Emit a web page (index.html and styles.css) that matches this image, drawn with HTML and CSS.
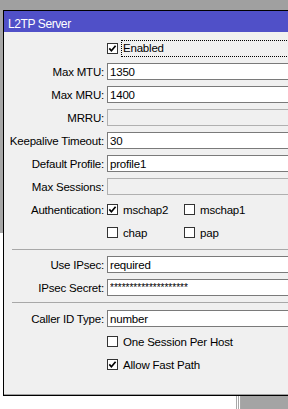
FILE: index.html
```html
<!DOCTYPE html>
<html>
<head>
    <meta charset="utf-8" />
    <title>L2TP Server</title>
    <link rel="stylesheet" href="styles.css">
</head>
<body>
    <div class="screen">
        <div class="desk_top"></div>
        <div class="desk_middle">
            <div class="desk_edge"></div>
            <div class="window">
                <div class="title">L2TP Server</div>
                <div class="content">
                    <div class="group">
                        <span></span>
                        <div class="checks">
                            <span class="check check_focus">
                                <span class="box"><svg width="9" height="9" viewBox="0 0 9 9"><path d="M1.3 4.4 L3.4 6.8 L7.6 1.8" fill="none" stroke="#000" stroke-width="1.7" /></svg></span>
                                <span class="focus">Enabled</span>
                            </span>
                        </div>

                        <span class="caption">Max MTU:</span>
                        <input class="field" type="text" readonly value="1350" />

                        <span class="caption">Max MRU:</span>
                        <input class="field" type="text" readonly value="1400" />

                        <span class="caption">MRRU:</span>
                        <input class="field" type="text" disabled value="" />

                        <span class="caption">Keepalive Timeout:</span>
                        <input class="field" type="text" readonly value="30" />

                        <span class="caption">Default Profile:</span>
                        <input class="field" type="text" readonly value="profile1" />

                        <span class="caption">Max Sessions:</span>
                        <input class="field" type="text" disabled value="" />

                        <span class="caption">Authentication:</span>
                        <div class="checks">
                            <span class="check">
                                <span class="box"><svg width="9" height="9" viewBox="0 0 9 9"><path d="M1.3 4.4 L3.4 6.8 L7.6 1.8" fill="none" stroke="#000" stroke-width="1.7" /></svg></span>
                                mschap2
                            </span>
                            <span class="check"><span class="box"></span>mschap1</span>
                        </div>

                        <span></span>
                        <div class="checks">
                            <span class="check"><span class="box"></span>chap</span>
                            <span class="check"><span class="box"></span>pap</span>
                        </div>
                    </div>

                    <hr class="sep_first" />

                    <div class="group">
                        <span class="caption">Use IPsec:</span>
                        <input class="field" type="text" readonly value="required" />

                        <span class="caption">IPsec Secret:</span>
                        <input class="field field_secret" type="text" readonly value="********************" />
                    </div>

                    <hr class="sep_second" />

                    <div class="group">
                        <span class="caption">Caller ID Type:</span>
                        <input class="field" type="text" readonly value="number" />

                        <span></span>
                        <div class="checks">
                            <span class="check"><span class="box"></span>One Session Per Host</span>
                        </div>

                        <span></span>
                        <div class="checks">
                            <span class="check">
                                <span class="box"><svg width="9" height="9" viewBox="0 0 9 9"><path d="M1.3 4.4 L3.4 6.8 L7.6 1.8" fill="none" stroke="#000" stroke-width="1.7" /></svg></span>
                                Allow Fast Path
                            </span>
                        </div>
                    </div>
                </div>
            </div>
        </div>
        <div class="desk_bottom">
            <div class="desk_blank"></div>
            <div class="desk_split"></div>
            <div class="desk_gray"></div>
        </div>
    </div>
</body>
</html>
```

FILE: styles.css
```css
* {
    font-family: "Liberation Sans", Arial, sans-serif;
}

body {
    margin: 0;
}

.screen {
    width: 288px;
    height: 409px;
    overflow: hidden;
    background: #fff;
    display: flex;
    flex-direction: column;
    font-size: 11.5px;
    letter-spacing: -0.2px;
    color: #000;
}

.desk_top {
    flex: none;
    height: 10px;
    background: #a0a0a0;
}

.desk_middle {
    flex: none;
    height: 386px;
    display: flex;
}

.desk_edge {
    flex: none;
    width: 3px;
    background: linear-gradient(#a6a6a6 0 223px, #fff 223px);
}

.window {
    flex: none;
    width: 320px;
    box-sizing: border-box;
    border: 1px solid #000;
    border-right: none;
    background: #f0f0f0;
    display: flex;
    flex-direction: column;
}

.title {
    flex: none;
    height: 21px;
    box-sizing: border-box;
    padding: 5px 0 0 4px;
    line-height: 17px;
    font-size: 12px;
    letter-spacing: -0.4px;
    background: #5050c8;
    color: #fff;
}

.content {
    flex: 1;
    padding-top: 8px;
    border-bottom: 1px solid #a0a0a0;
}

.group {
    display: grid;
    grid-template-columns: 100px 1fr;
    grid-auto-rows: 17px;
    column-gap: 3px;
    row-gap: 6px;
    align-items: center;
}

.caption {
    text-align: right;
    white-space: nowrap;
}

.field {
    width: 100%;
    height: 17px;
    box-sizing: border-box;
    margin: 0;
    padding: 0 2px;
    border: 1px solid #7a7a7a;
    border-radius: 0;
    background: #fff;
    color: #000;
    font-size: 11.5px;
    letter-spacing: -0.2px;
    outline: none;
}

    .field:disabled {
        background: #f0f0f0;
        border-color: #b0b0b0;
    }

.field_secret {
    font-size: 10px;
    letter-spacing: 0;
}

.checks {
    display: grid;
    grid-template-columns: 77px auto;
    align-items: center;
    height: 17px;
}

.check {
    display: flex;
    align-items: center;
    white-space: nowrap;
    height: 17px;
}

.box {
    flex: none;
    width: 11px;
    height: 11px;
    box-sizing: border-box;
    margin-right: 5px;
    border: 1px solid #333;
    background: #fff;
    display: flex;
    align-items: center;
    justify-content: center;
}

.check_focus {
    width: 300px;
}

    .check_focus .box {
        margin-right: 3px;
    }

.focus {
    flex: 1;
    height: 17px;
    box-sizing: border-box;
    padding-left: 1px;
    line-height: 15px;
    border: 1px dotted #000;
    border-right: none;
}

hr {
    height: 0;
    padding: 0;
    border: none;
    border-top: 1px solid #a8a8a8;
    margin-left: 8px;
    margin-right: 0;
}

.sep_first {
    margin-top: 8px;
    margin-bottom: 6px;
}

.sep_second {
    margin-top: 6px;
    margin-bottom: 7px;
}

.desk_bottom {
    flex: 1;
    display: flex;
}

.desk_blank {
    flex: none;
    width: 236px;
}

.desk_split {
    flex: none;
    width: 5px;
    background: repeating-linear-gradient(90deg, #a8a8a8 0 1px, #fff 1px 2px);
}

.desk_gray {
    flex: 1;
    background: #a4a4a4;
}
```
